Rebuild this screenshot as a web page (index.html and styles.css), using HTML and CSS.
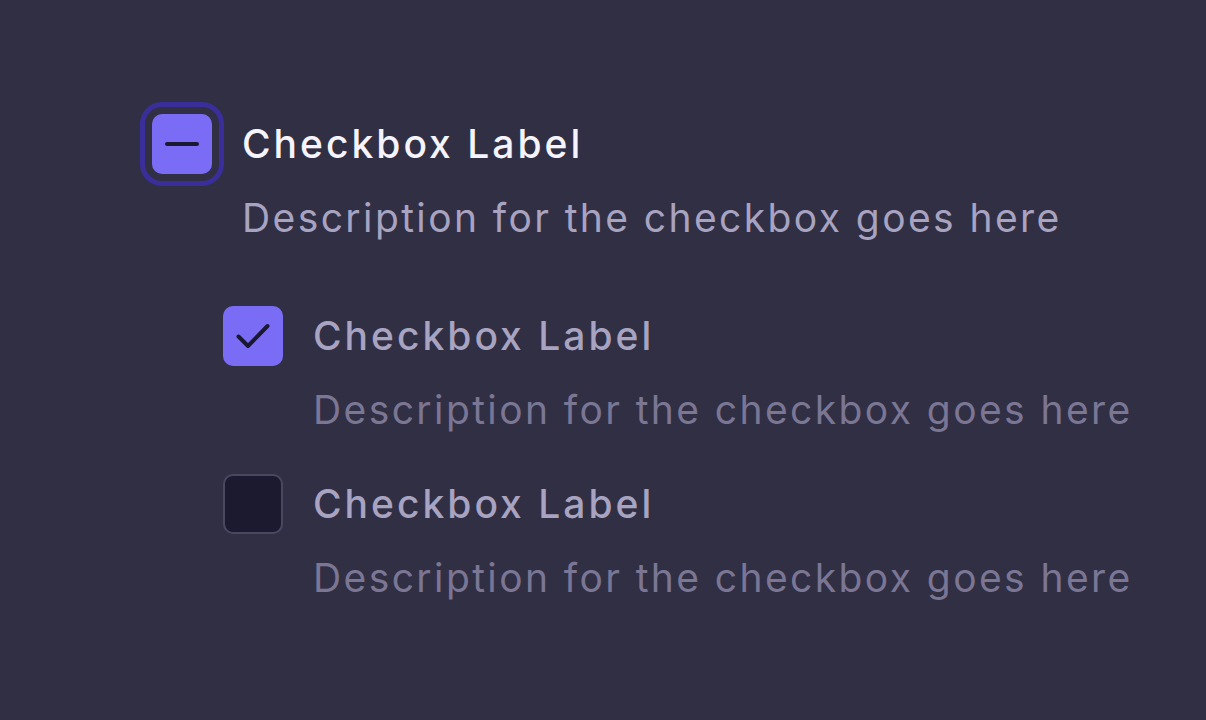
FILE: index.html
```html
<!DOCTYPE html>
<html lang="en">
<head>
  <meta charset="UTF-8">
  <meta name="viewport" content="width=device-width, initial-scale=1.0">
  <title>Checkbox Group</title>
  <link rel="stylesheet" href="styles.css">
</head>
<body>
  <!-- parent checkbox, partly checked -->
  <div class="checkbox-group">
    <div class="check-item parent">
      <div class="check-box indeterminate focused">
        <span class="dash"></span>
      </div>
      <div class="check-text">
        <div class="check-label">Checkbox Label</div>
        <div class="check-desc">Description for the checkbox goes here</div>
      </div>
    </div>

    <div class="children">
      <div class="check-item">
        <div class="check-box checked">
          <svg width="60" height="60" viewBox="0 0 60 60">
            <path d="M15.5 30.5 L25 40 L44.5 20" fill="none" stroke="#1b1930" stroke-width="4" stroke-linecap="round" stroke-linejoin="round"/>
          </svg>
        </div>
        <div class="check-text">
          <div class="check-label">Checkbox Label</div>
          <div class="check-desc">Description for the checkbox goes here</div>
        </div>
      </div>

      <div class="check-item">
        <div class="check-box"></div>
        <div class="check-text">
          <div class="check-label">Checkbox Label</div>
          <div class="check-desc">Description for the checkbox goes here</div>
        </div>
      </div>
    </div>
  </div>
</body>
</html>
```

FILE: styles.css
```css
:root {
  --bg-color: #312f44;
  --main-color: #7b6cf6;
  --ring-color: #3a2f9a;
  --label-color: #f5f3fb;
  --muted-color: #a7a3c0;
  --dim-color: #7a7694;
}

body {
  margin: 0;
  padding: 0;
  background-color: var(--bg-color);
  font-family: "Inter", "Liberation Sans", sans-serif;
  height: 100vh;
}

.checkbox-group {
  padding: 114px 0 0 152px;
}

.check-item {
  display: flex;
  gap: 30px;
}

.children {
  display: flex;
  flex-direction: column;
  gap: 34px;
  margin-top: 58px;
  margin-left: 71px;
}

.check-box {
  flex: none;
  width: 60px;
  height: 60px;
  border-radius: 10px;
  box-sizing: border-box;
  background-color: #1b1a2e;
  border: 2px solid #4a4860;
  display: flex;
  align-items: center;
  justify-content: center;
}

.check-box.checked,
.check-box.indeterminate {
  background-color: var(--main-color);
  border: none;
}

.check-box.focused {
  outline: 5px solid var(--ring-color);
  outline-offset: 7px;
}

.dash {
  width: 34px;
  height: 4px;
  border-radius: 2px;
  background-color: #1b1930;
}

.check-label {
  font-size: 39px;
  font-weight: 500;
  line-height: 60px;
  letter-spacing: 3px;
  color: var(--muted-color);
}

.check-desc {
  font-size: 39px;
  line-height: 60px;
  letter-spacing: 2.4px;
  margin-top: 14px;
  color: var(--dim-color);
}

.parent .check-label {
  color: var(--label-color);
}

.parent .check-desc {
  color: var(--muted-color);
}
```
